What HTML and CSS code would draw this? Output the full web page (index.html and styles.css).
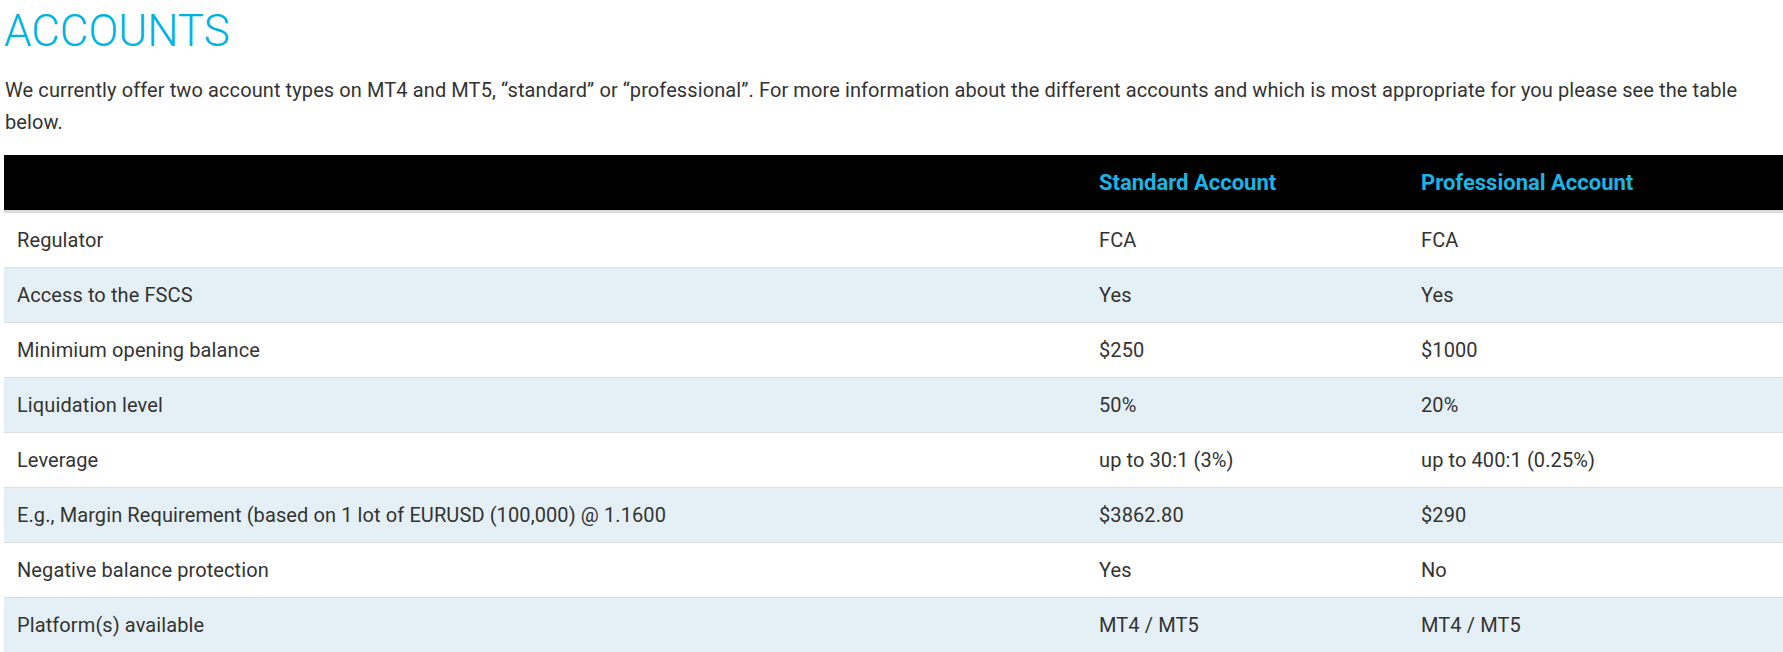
FILE: index.html
```html
<!DOCTYPE html>
<html lang="en">
<head>
<meta charset="utf-8">
<title>Accounts</title>
<link rel="stylesheet" href="styles.css">
</head>
<body>
<main class="page">
  <h1 class="title">ACCOUNTS</h1>
  <p class="intro">We currently offer two account types on MT4 and MT5, “standard” or “professional”. For more information about the different accounts and which is most appropriate for you please see the table below.</p>
  <table class="accounts">
    <colgroup>
      <col class="c1">
      <col class="c2">
      <col class="c3">
    </colgroup>
    <thead>
      <tr>
        <th></th>
        <th>Standard Account</th>
        <th>Professional Account</th>
      </tr>
    </thead>
    <tbody>
      <tr><td>Regulator</td><td>FCA</td><td>FCA</td></tr>
      <tr><td>Access to the FSCS</td><td>Yes</td><td>Yes</td></tr>
      <tr><td>Minimium opening balance</td><td>$250</td><td>$1000</td></tr>
      <tr><td>Liquidation level</td><td>50%</td><td>20%</td></tr>
      <tr><td>Leverage</td><td>up to 30:1 (3%)</td><td>up to 400:1 (0.25%)</td></tr>
      <tr><td>E.g., Margin Requirement (based on 1 lot of EURUSD (100,000) @ 1.1600</td><td>$3862.80</td><td>$290</td></tr>
      <tr><td>Negative balance protection</td><td>Yes</td><td>No</td></tr>
      <tr><td>Platform(s) available</td><td>MT4 / MT5</td><td>MT4 / MT5</td></tr>
    </tbody>
  </table>
</main>
</body>
</html>
```
FILE: styles.css
```css
html, body {
  margin: 0;
  padding: 0;
  background: #fff;
}
body {
  font-family: Roboto, "Liberation Sans", sans-serif;
  color: #333;
  overflow: hidden;
}
.page {
  padding: 0 0 0 4px;
}
.title {
  margin: 0;
  padding-top: 6px;
  font-size: 44px;
  font-weight: 300;
  line-height: 50px;
  color: #00b4e1;
}
.intro {
  margin: 18px 0 17px 0;
  font-size: 20px;
  line-height: 32px;
  letter-spacing: 0.1px;
  padding-left: 1px;
}
.accounts {
  border-collapse: separate;
  border-spacing: 0;
  width: 1779px;
  table-layout: fixed;
  font-size: 20px;
  letter-spacing: 0.1px;
}
.c1 { width: 1082px; }
.c2 { width: 322px; }
.c3 { width: 375px; }
.accounts th {
  background: #000;
  color: #1cb4e4;
  font-size: 22px;
  font-weight: 700;
  letter-spacing: 0;
  text-align: left;
  height: 55px;
  padding: 0 13px;
  border-bottom: 3px solid #ddd;
  box-sizing: content-box;
}
.accounts td {
  height: 54px;
  padding: 0 13px;
  border-bottom: 1px solid #ddd;
  vertical-align: middle;
  box-sizing: content-box;
}
.accounts tbody tr:nth-child(even) td {
  background: #e5f0f6;
}
```
